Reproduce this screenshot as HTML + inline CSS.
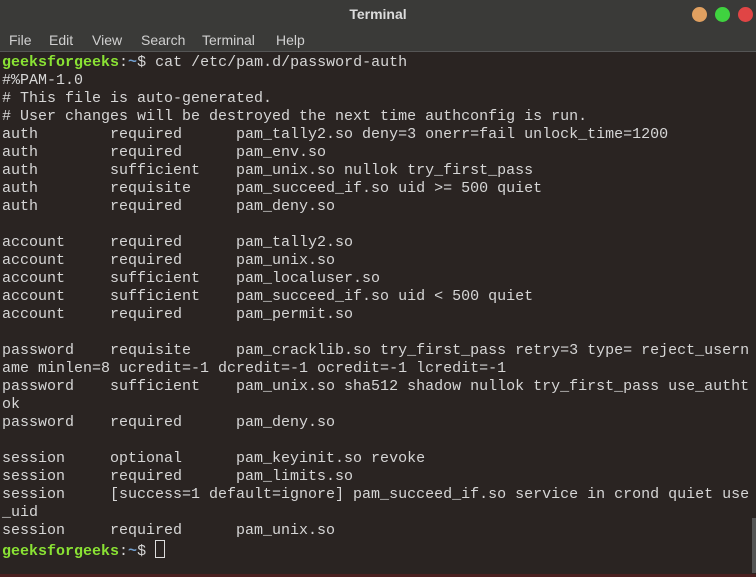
<!DOCTYPE html>
<html><head><meta charset="utf-8"><style>
html,body{margin:0;padding:0;width:756px;height:577px;overflow:hidden;background:#2a2422}
.title{position:absolute;left:0;top:0;width:756px;height:29px;background:#3a3a38;color:#dcdcdc;font:bold 14px "Liberation Sans",sans-serif;text-align:center;line-height:29px}
.dot{position:absolute;top:7px;width:15px;height:15px;border-radius:50%}
.menu{position:absolute;left:0;top:29px;width:756px;height:22px;background:#3a3a38;border-bottom:1px solid #555;color:#d0d0d0;font:14px "Liberation Sans",sans-serif;line-height:22px}
.menu span{position:absolute;top:0}
pre{position:absolute;left:2px;top:54px;margin:0;font:15px/18px "Liberation Mono",monospace;color:#d6d6d6;letter-spacing:0}
.g{color:#8ae234;font-weight:bold}.b{color:#729fcf;font-weight:bold}
.cur{display:inline-block;width:8px;height:16px;border:1px solid #ddd;vertical-align:-3px}
.sb{position:absolute;left:752px;top:518px;width:4px;height:55px;background:#555}
.bot{position:absolute;left:0;top:574px;width:756px;height:3px;background:#4a2020}
</style></head><body>
<div class="title">Terminal
<div class="dot" style="left:692px;background:#e0a060"></div>
<div class="dot" style="left:715px;background:#3fd23f"></div>
<div class="dot" style="left:738px;background:#e04545"></div>
</div>
<div class="menu"><span style="left:9px">File</span><span style="left:49px">Edit</span><span style="left:92px">View</span><span style="left:141px">Search</span><span style="left:202px">Terminal</span><span style="left:276px">Help</span></div>
<pre><span class="g">geeksforgeeks</span>:<span class="b">~</span>$ cat /etc/pam.d/password-auth
#%PAM-1.0
# This file is auto-generated.
# User changes will be destroyed the next time authconfig is run.
auth        required      pam_tally2.so deny=3 onerr=fail unlock_time=1200
auth        required      pam_env.so
auth        sufficient    pam_unix.so nullok try_first_pass
auth        requisite     pam_succeed_if.so uid >= 500 quiet
auth        required      pam_deny.so

account     required      pam_tally2.so
account     required      pam_unix.so
account     sufficient    pam_localuser.so
account     sufficient    pam_succeed_if.so uid < 500 quiet
account     required      pam_permit.so

password    requisite     pam_cracklib.so try_first_pass retry=3 type= reject_usern
ame minlen=8 ucredit=-1 dcredit=-1 ocredit=-1 lcredit=-1
password    sufficient    pam_unix.so sha512 shadow nullok try_first_pass use_autht
ok
password    required      pam_deny.so

session     optional      pam_keyinit.so revoke
session     required      pam_limits.so
session     [success=1 default=ignore] pam_succeed_if.so service in crond quiet use
_uid
session     required      pam_unix.so
<span class="g">geeksforgeeks</span>:<span class="b">~</span>$ <span class="cur"></span></pre>
<div class="sb"></div>
<div class="bot"></div>
</body></html>
